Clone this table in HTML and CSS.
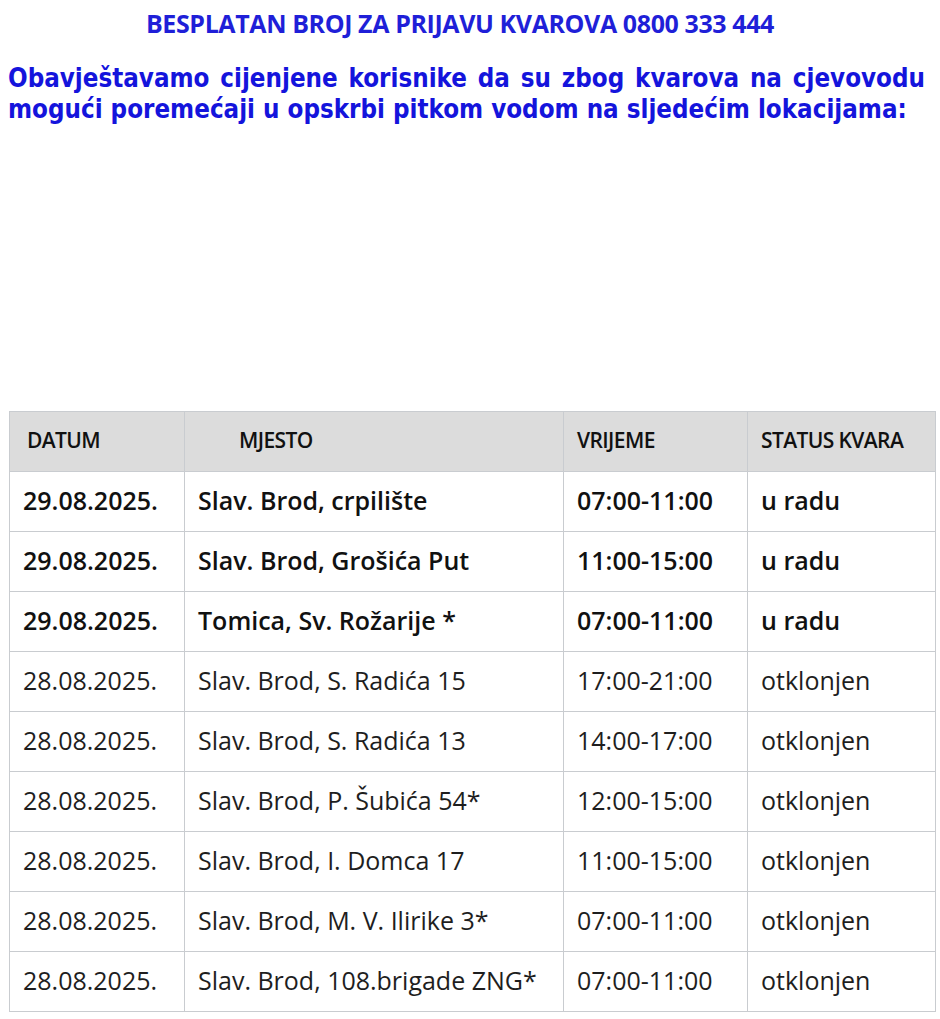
FILE: index.html
```html
<!DOCTYPE html>
<html lang="hr">
<head>
<meta charset="utf-8">
<title>Kvarovi</title>
<link rel="stylesheet" href="styles.css">
</head>
<body>
<h1 class="hotline">BESPLATAN BROJ ZA PRIJAVU KVAROVA 0800 333 444</h1>
<div class="notice">
  <div class="line line-full">Obavještavamo cijenjene korisnike da su zbog kvarova na cjevovodu</div>
  <div class="line">mogući poremećaji u opskrbi pitkom vodom na sljedećim lokacijama:</div>
</div>
<table class="faults">
  <colgroup>
    <col class="c-date"><col class="c-place"><col class="c-time"><col class="c-status">
  </colgroup>
  <thead>
    <tr><th class="h-date">DATUM</th><th class="h-place">MJESTO</th><th>VRIJEME</th><th>STATUS KVARA</th></tr>
  </thead>
  <tbody>
    <tr class="active"><td>29.08.2025.</td><td>Slav. Brod, crpilište</td><td>07:00-11:00</td><td>u radu</td></tr>
    <tr class="active"><td>29.08.2025.</td><td>Slav. Brod, Grošića Put</td><td>11:00-15:00</td><td>u radu</td></tr>
    <tr class="active"><td>29.08.2025.</td><td>Tomica, Sv. Rožarije *</td><td>07:00-11:00</td><td>u radu</td></tr>
    <tr><td>28.08.2025.</td><td>Slav. Brod, S. Radića 15</td><td>17:00-21:00</td><td>otklonjen</td></tr>
    <tr><td>28.08.2025.</td><td>Slav. Brod, S. Radića 13</td><td>14:00-17:00</td><td>otklonjen</td></tr>
    <tr><td>28.08.2025.</td><td>Slav. Brod, P. Šubića 54*</td><td>12:00-15:00</td><td>otklonjen</td></tr>
    <tr><td>28.08.2025.</td><td>Slav. Brod, I. Domca 17</td><td>11:00-15:00</td><td>otklonjen</td></tr>
    <tr><td>28.08.2025.</td><td>Slav. Brod, M. V. Ilirike 3*</td><td>07:00-11:00</td><td>otklonjen</td></tr>
    <tr><td>28.08.2025.</td><td>Slav. Brod, 108.brigade ZNG*</td><td>07:00-11:00</td><td>otklonjen</td></tr>
  </tbody>
</table>
</body>
</html>
```
FILE: styles.css
```css
html, body {
  margin: 0;
  padding: 0;
  background: #ffffff;
}
body {
  padding: 0 8px;
}
.hotline {
  margin: 0;
  padding: 8px 20px 0 0;
  height: 34px;
  text-align: center;
  font-family: "Open Sans", sans-serif;
  font-weight: 700;
  font-size: 25px;
  line-height: 30px;
  letter-spacing: -0.4px;
  color: #1f1fd8;
}
.notice {
  margin-top: 21px;
  width: 917px;
  font-family: "DejaVu Sans Condensed", "DejaVu Sans", sans-serif;
  font-stretch: condensed;
  font-weight: bold;
  font-size: 25.7px;
  line-height: 31px;
  color: #1414dc;
}
.notice .line {
  white-space: nowrap;
}
.notice .line-full {
  text-align: justify;
  text-align-last: justify;
}
.faults {
  margin: 286px 0 0 1px;
  width: 926px;
  border-collapse: collapse;
  table-layout: fixed;
  font-family: "Open Sans", sans-serif;
  color: #1e1e1e;
}
.c-date { width: 175px; }
.c-place { width: 379px; }
.c-time { width: 184px; }
.c-status { width: 188px; }
.faults th, .faults td {
  border: 1px solid #c9ccd0;
  height: 60px;
  padding: 0 0 3px 13px;
  box-sizing: border-box;
  text-align: left;
  vertical-align: middle;
  white-space: nowrap;
}
.faults th {
  background: #dcdcdc;
  font-size: 21px;
  font-weight: 600;
  letter-spacing: -0.6px;
  color: #111;
}
.faults th.h-date { padding-left: 17px; }
.faults th.h-place { padding-left: 54px; }
.faults td {
  font-size: 25px;
  font-weight: 400;
  letter-spacing: 0;
}
.faults tr.active td {
  font-weight: 600;
  color: #111;
}
```
